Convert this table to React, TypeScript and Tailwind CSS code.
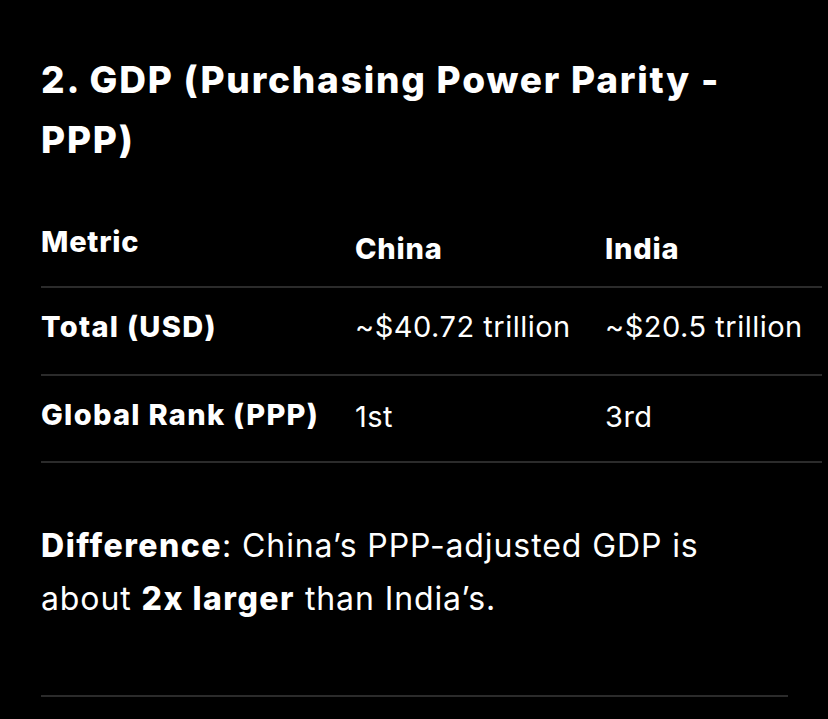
export default function App() {
  const font = { fontFamily: 'Inter, "Noto Sans", sans-serif' };
  return (
    <div className="w-[828px] h-[719px] overflow-hidden bg-black text-white" style={font}>
      <div className="pl-[41px] pt-[50px]">
        <h2 className="text-[37px] leading-[60px] font-extrabold tracking-[1.8px]">
          2. GDP (Purchasing Power Parity -<br />PPP)
        </h2>
        <div className="w-[781px] text-[29px] leading-[36px] tracking-[0.5px]">
          <div className="grid grid-cols-[314px_250px_217px] h-[118px] pt-[54px] border-b-2 border-[#2b2b2b] font-extrabold tracking-[0.8px]">
            <div>Metric</div>
            <div className="pt-[7px]">China</div>
            <div className="pt-[7px]">India</div>
          </div>
          <div className="grid grid-cols-[314px_250px_217px] h-[88px] pt-[21px] border-b-2 border-[#2b2b2b]">
            <div className="font-extrabold tracking-[1.3px]">Total (USD)</div>
            <div>~$40.72 trillion</div>
            <div>~$20.5 trillion</div>
          </div>
          <div className="grid grid-cols-[314px_250px_217px] h-[87px] pt-[21px] border-b-2 border-[#2b2b2b]">
            <div className="font-extrabold tracking-[1.3px]">Global Rank (PPP)</div>
            <div className="pt-[2px]">1st</div>
            <div className="pt-[2px]">3rd</div>
          </div>
        </div>
        <p className="mt-[56px] text-[32px] leading-[53px] tracking-[0.9px]">
          <span className="font-extrabold tracking-[1.5px]">Difference</span>: China’s PPP-adjusted GDP is
          <br />
          about <span className="font-extrabold tracking-[1.5px]">2x larger</span> than India’s.
        </p>
        <div className="mt-[70px] w-[747px] h-[2px] bg-[#2b2b2b]" />
      </div>
    </div>
  );
}
